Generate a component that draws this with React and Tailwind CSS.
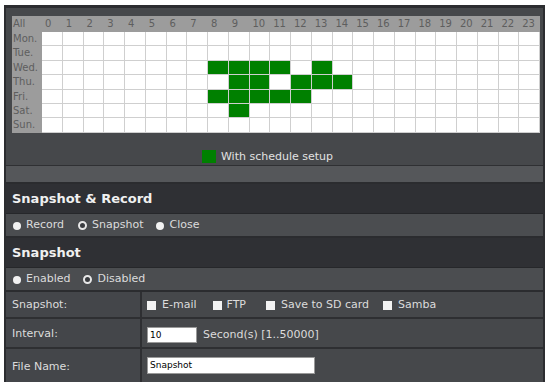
import React from 'react';

const hours = [...Array(24)].map((_, i) => i);
const days = ['Mon.', 'Tue.', 'Wed.', 'Thu.', 'Fri.', 'Sat.', 'Sun.'];

// green cells per day index (0 = Mon)
const schedule = {
  2: [8, 9, 10, 11, 13],
  3: [9, 10, 12, 13, 14],
  4: [8, 9, 10, 11, 12],
  5: [9],
};

const Radio = ({ on }) =>
  on ? (
    <span className="inline-block w-[8px] h-[8px] rounded-full bg-[#f2f2f2]" />
  ) : (
    <span className="inline-block w-[9px] h-[9px] rounded-full border-[2px] border-[#e8e8e8] bg-[#3a3c40]" />
  );

const Check = () => <span className="inline-block w-[9px] h-[9px] bg-[#f2f2f2]" />;

const App = () => {
  return (
    <div
      className="w-[548px] h-[382px] bg-white pt-[5px] pl-[4px] overflow-hidden text-[#dcdcdc]"
      style={{ fontFamily: '"DejaVu Sans", Verdana, sans-serif' }}
    >
      <div className="w-[541px] h-[377px] border-l-[2px] border-t-[3px] border-r-[2px] border-[#2c2d30] bg-[#46484b]">
        {/* Schedule grid */}
        <div className="pl-[6px] pr-[3px] pt-[8px]">
          <div className="grid grid-cols-[30px_repeat(24,1fr)] bg-white">
            <div className="h-[16px] bg-[#9c9c9c] text-[#5e5e5e] text-[10px] leading-[16px] pl-[1px]">All</div>
            {hours.map((h) => (
              <div key={h} className="h-[16px] bg-[#9c9c9c] text-[#5e5e5e] text-[10px] leading-[16px] pl-[3px]">
                {h}
              </div>
            ))}
            {days.map((d, r) => (
              <React.Fragment key={d}>
                <div className="h-[14.4px] bg-[#9c9c9c] text-[#5e5e5e] text-[10px] leading-[14px] pl-[1px]">{d}</div>
                {hours.map((h) => {
                  const on = (schedule[r] || []).includes(h);
                  return (
                    <div
                      key={h}
                      className={`h-[14.4px] border-r border-b border-[#cfcfcf] ${on ? 'bg-[#008000]' : 'bg-white'}`}
                    />
                  );
                })}
              </React.Fragment>
            ))}
          </div>
        </div>

        {/* Legend */}
        <div className="h-[33px] pt-[17px] flex justify-center items-start border-b border-[#2f3033]">
          <div className="flex items-center gap-[5px] mr-[14px]">
            <span className="inline-block w-[14px] h-[13px] bg-[#008000]" />
            <span className="text-[11px] leading-[13px] text-[#e2e2e2]">With schedule setup</span>
          </div>
        </div>

        <div className="h-[18px] bg-[#55575a] border-b-[2px] border-[#2b2c2f]" />

        {/* Snapshot & Record */}
        <div className="h-[30px] bg-[#2f3034] flex items-center pl-[6px] pt-[2px] text-[13px] font-bold text-[#f0f0f0] border-b border-[#26272a]">
          Snapshot &amp; Record
        </div>
        <div className="h-[24px] bg-[#4b4d50] flex items-center pl-[7px] pt-[2px] text-[11px] border-b-[2px] border-[#2b2c2f]">
          <span className="flex items-center gap-[5px]"><Radio on />Record</span>
          <span className="flex items-center gap-[5px] ml-[14px]"><Radio />Snapshot</span>
          <span className="flex items-center gap-[5px] ml-[13px]"><Radio on />Close</span>
        </div>

        {/* Snapshot */}
        <div className="h-[30px] bg-[#2f3034] flex items-center pl-[6px] pt-[2px] text-[13px] font-bold text-[#f0f0f0] border-b border-[#26272a]">
          Snapshot
        </div>
        <div className="h-[24px] bg-[#4b4d50] flex items-center pl-[7px] pt-[2px] text-[11px] border-b-[2px] border-[#2b2c2f]">
          <span className="flex items-center gap-[5px]"><Radio on />Enabled</span>
          <span className="flex items-center gap-[5px] ml-[13px]"><Radio />Disabled</span>
        </div>

        <div className="grid grid-cols-[136px_1fr] text-[11px]">
          <div className="h-[27px] flex items-center pl-[6px] pt-[2px] bg-[#44464a] border-r-[2px] border-b-[2px] border-[#2e2f32]">Snapshot:</div>
          <div className="h-[27px] flex items-center pl-[5px] pt-[2px] bg-[#46484b] border-b-[2px] border-[#2e2f32]">
            <span className="flex items-center gap-[6px]"><Check />E-mail</span>
            <span className="flex items-center gap-[5px] ml-[16px]"><Check />FTP</span>
            <span className="flex items-center gap-[6px] ml-[20px]"><Check />Save to SD card</span>
            <span className="flex items-center gap-[6px] ml-[14px]"><Check />Samba</span>
          </div>

          <div className="h-[30px] flex items-center pl-[6px] pt-[4px] bg-[#44464a] border-r-[2px] border-b-[2px] border-[#2e2f32]">Interval:</div>
          <div className="h-[30px] flex items-start pl-[5px] pt-[8px] bg-[#46484b] border-b-[2px] border-[#2e2f32]">
            <input
              readOnly
              value="10"
              className="w-[50px] h-[16px] bg-white text-black text-[9px] px-[2px] outline-none border border-[#999]"
            />
            <span className="ml-[6px] leading-[16px]">Second(s) [1..50000]</span>
          </div>

          <div className="h-[33px] flex items-start pl-[6px] pt-[10px] bg-[#44464a] border-r-[2px] border-[#2e2f32]">File Name:</div>
          <div className="h-[33px] flex items-start pl-[5px] pt-[8px] bg-[#46484b]">
            <input
              readOnly
              value="Snapshot"
              className="w-[168px] h-[17px] bg-white text-black text-[9px] px-[2px] outline-none border border-[#999]"
            />
          </div>
        </div>
      </div>
    </div>
  );
};

export default App;
